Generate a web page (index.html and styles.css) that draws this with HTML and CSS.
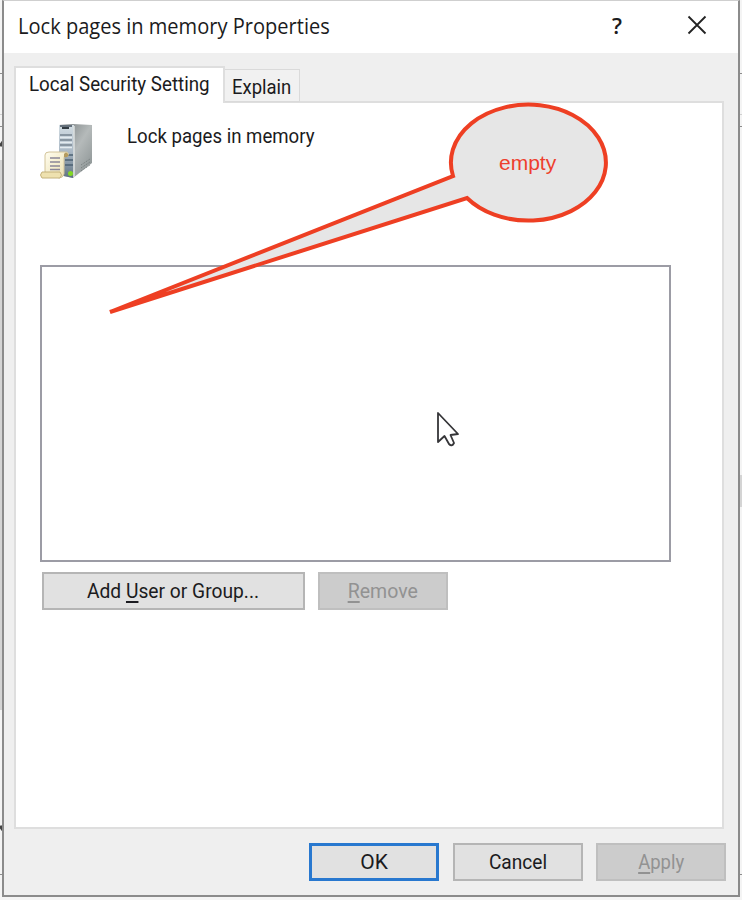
FILE: index.html
```
<!DOCTYPE html>
<html lang="en">
<head>
<meta charset="utf-8">
<title>Lock pages in memory Properties</title>
<link rel="stylesheet" href="styles.css">
</head>
<body>
<svg class="backdrop" width="742" height="900" aria-hidden="true">
  <path d="M0 73.5H3M0 126.5H3M738 73.5H742M738 126.5H742M0 874.5H3M738 874.5H742" stroke="#8c8c8c"/>
  <path d="M0 114.5H3M738 114.5H742" stroke="#d0d0d0"/>
  <path d="M0 146L3 142M0 826L3 830" stroke="#444" stroke-width="3"/>
  <path d="M0 160H3V710H0ZM740 475H742V507H740Z" fill="#d4d4d4"/>
</svg>
<main class="window">
  <header class="titlebar">
    <h1><span class="fit title-text">Lock pages in memory Properties</span></h1>
    <span class="help">?</span>
    <svg class="close" width="20" height="20" viewBox="0 0 20 20"><path d="M1.5 1.5l17 17M18.5 1.5l-17 17" fill="none" stroke="#222" stroke-width="1.8"/></svg>
  </header>
  <nav class="tabs">
    <div class="tab active"><span class="fit local-text">Local Security Setting</span></div>
    <div class="tab"><span class="fit explain-text">Explain</span></div>
  </nav>
  <section class="page">
    <div class="policy">
      <svg class="server" width="54" height="58" viewBox="0 0 54 58">
        <defs>
          <linearGradient id="side" x1="0" y1="0" x2="1" y2="1"><stop offset="0" stop-color="#737a7c"/><stop offset=".5" stop-color="#b5baba"/><stop offset="1" stop-color="#858d8e"/></linearGradient>
          <linearGradient id="front" x1="0" y1="0" x2="0" y2="1"><stop offset="0" stop-color="#d3dde3"/><stop offset=".5" stop-color="#aab8c5"/><stop offset="1" stop-color="#5e7180"/></linearGradient>
          <linearGradient id="paper" x1="0" y1="0" x2="1" y2="1"><stop offset="0" stop-color="#fffdf0"/><stop offset="1" stop-color="#eadda9"/></linearGradient>
        </defs>
        <path d="M19 2l14-1 19 1v38L33 55l-14-3z" fill="url(#side)"/>
        <path d="M19 2h15l-1 53-14-3z" fill="url(#front)"/>
        <path d="M20 3h12" stroke="#65717c" stroke-width="2"/>
        <path d="M22 5h7" stroke="#333c43" stroke-width="2"/>
        <path d="M20 12h12M20 17h12M20 22h12" stroke="#8996a1" stroke-width="1.8"/>
        <path d="M20 14.500h12M20 19.500h12M20 24.500h12" stroke="#e4ebef" stroke-width="1.5"/>
        <path d="M25 32h8M25 37h8M25 42h8" stroke="#4c6173" stroke-width="1.5"/>
        <path d="M34 3v51" stroke="#dce1e1" stroke-width="1.5"/>
        <path d="M41 42l9-6M41 45l9-6M41 48l9-6" stroke="#737b7b" stroke-dasharray="1 1"/>
        <circle cx="30.500" cy="50.500" r="2.500" fill="#83d824"/>
        <path d="M5 49V32q0-3 4-3h18q3 2 0 5v-3q-3 0-3 4v16q-1 4-5 4z" fill="url(#paper)" stroke="#d3c49a"/>
        <path d="M24 34v-3q2-3 4 0 1 4-4 3" fill="#b49b5f"/>
        <path d="M2 49h18q3 3 0 6H2q-3-3 0-6z" fill="#eee1af" stroke="#c4b27c"/>
        <path d="M10 35h10M10 39h10M10 43h10M10 46.500h10" stroke="#8a8698" stroke-width="1.300"/>
      </svg>
      <span class="fit policy-text">Lock pages in memory</span>
    </div>
    <div class="list"></div>
    <div class="actions">
      <button class="add"><span class="fit add-text">Add <u>U</u>ser or Group...</span></button>
      <button disabled><span class="fit remove-text"><u>R</u>emove</span></button>
    </div>
  </section>
  <footer>
    <button class="default"><span class="fit ok-text">OK</span></button>
    <button><span class="fit cancel-text">Cancel</span></button>
    <button disabled><span class="fit apply-text"><u>A</u>pply</span></button>
  </footer>
</main>
<svg class="callout" width="742" height="330">
  <path d="M453 177A77.500 58 0 1 1 467 199L110 313Z" fill="#e6e6e6" stroke="#ee3f23" stroke-width="4"/>
</svg>
<span class="callout-label">empty</span>
<svg class="pointer" width="24" height="36" viewBox="0 0 24 36"><path d="M2 2V31L8.500 25 13 33Q16 36 18 32L14.500 24 22 23Z" fill="#fff" stroke="#353538" stroke-width="1.800" stroke-linejoin="round"/></svg>
</body>
</html>
```
FILE: styles.css
```
* { box-sizing: border-box; }
body {
  margin: 0;
  width: 742px;
  height: 900px;
  position: relative;
  overflow: hidden;
  background: #f4f4f4;
  color: #1b1b20;
  font: 21px/26px Roboto, "Liberation Sans", sans-serif;
}
.backdrop, .callout { position: absolute; left: 0; top: 0; }
.callout { left: -0.5px; top: -1px; }
.window {
  position: relative;
  width: 738px;
  height: 897px;
  margin-left: 2px;
  border: 2px solid #8b8b8b;
  border-top: 1px solid #cfcfcf;
  background: #efefef;
}
.titlebar {
  height: 52px;
  padding: 0 31px 2px 14px;
  display: flex;
  align-items: center;
  background: #fff;
}
h1 { flex: 1; margin: 0; font: 21px/26px "Open Sans", sans-serif; }
.help { width: 12px; margin-right: 63px; padding-bottom: 2px; font: 600 22px/26px "Open Sans", sans-serif; }
.close { display: block; margin-bottom: 2px; }
.fit { display: inline-block; white-space: nowrap; transform-origin: left center; }
button .fit { transform-origin: center; }
.tabs { height: 50px; padding: 13px 0 0 10px; display: flex; align-items: flex-start; position: relative; z-index: 1; }
.tab { width: 75px; height: 33px; margin-top: 3px; padding: 4px 0 0 7px; border: 1px solid #dadada; border-left: 0; background: #f1f1f1; }
.tab.active { width: 211px; height: 37px; margin-top: 0; padding: 3px 0 0 13px; border: 2px solid #dedede; border-bottom: 0; background: #fff; }
.page { width: 710px; height: 728px; margin: -2px 0 0 10px; padding: 20px 24px; border: 2px solid #dedede; background: #fff; }
.policy { height: 142px; display: flex; align-items: flex-start; }
.server { margin-right: 33px; }
.list { width: 631px; height: 297px; border: 2px solid #9c9ca5; }
.actions { display: flex; gap: 13px; padding: 10px 0 0 2px; }
button { width: 130px; height: 38px; padding: 0; border: 2px solid #b5b5b5; background: #e1e1e1; color: inherit; font: inherit; }
button.add { width: 263px; }
button:disabled { border-color: #bfbfbf; background: #cccccc; color: #929292; }
button.default { border: 3px solid #2878cf; }
u { text-decoration-thickness: 2px; text-underline-offset: 3px; text-decoration-skip-ink: none; }
footer { display: flex; justify-content: flex-end; gap: 13.5px; padding: 14px 12px 0 0; }
.callout-label { position: absolute; left: 499px; top: 150px; color: #ee3f2d; font: 21px/26px "Liberation Sans", sans-serif; }
.pointer { position: absolute; left: 436px; top: 411px; }
.title-text { transform: scaleX(.955); }
.local-text { transform: scaleX(.893); }
.explain-text { transform: scaleX(.88); }
.policy-text { transform: scaleX(.887); }
.add-text { transform: scaleX(.915); }
.remove-text { transform: scaleX(.93); }
.cancel-text { transform: scaleX(.91); }
.apply-text { transform: scaleX(.88); }
```
